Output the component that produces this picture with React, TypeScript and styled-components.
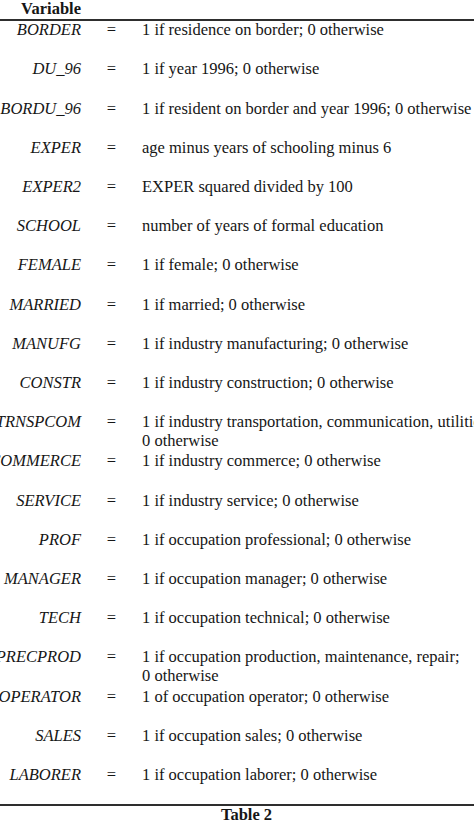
import styled, { createGlobalStyle } from 'styled-components'

const GlobalStyle = createGlobalStyle`
  html, body {
    margin: 0;
    padding: 0;
    background: #ffffff;
  }
  body {
    width: 474px;
    height: 825px;
    overflow: hidden;
    font-family: "Liberation Serif", "Times New Roman", serif;
    color: #161616;
  }
`

const rows: { name: string; lines: string[] }[] = [
  { name: 'BORDER', lines: ['1 if residence on border; 0 otherwise'] },
  { name: 'DU_96', lines: ['1 if year 1996; 0 otherwise'] },
  { name: 'BORDU_96', lines: ['1 if resident on border and year 1996; 0 otherwise'] },
  { name: 'EXPER', lines: ['age minus years of schooling minus 6'] },
  { name: 'EXPER2', lines: ['EXPER squared divided by 100'] },
  { name: 'SCHOOL', lines: ['number of years of formal education'] },
  { name: 'FEMALE', lines: ['1 if female; 0 otherwise'] },
  { name: 'MARRIED', lines: ['1 if married; 0 otherwise'] },
  { name: 'MANUFG', lines: ['1 if industry manufacturing; 0 otherwise'] },
  { name: 'CONSTR', lines: ['1 if industry construction; 0 otherwise'] },
  {
    name: 'TRNSPCOM',
    lines: ['1 if industry transportation, communication, utilities;', '0 otherwise'],
  },
  { name: 'COMMERCE', lines: ['1 if industry commerce; 0 otherwise'] },
  { name: 'SERVICE', lines: ['1 if industry service; 0 otherwise'] },
  { name: 'PROF', lines: ['1 if occupation professional; 0 otherwise'] },
  { name: 'MANAGER', lines: ['1 if occupation manager; 0 otherwise'] },
  { name: 'TECH', lines: ['1 if occupation technical; 0 otherwise'] },
  {
    name: 'PRECPROD',
    lines: ['1 if occupation production, maintenance, repair;', '0 otherwise'],
  },
  { name: 'OPERATOR', lines: ['1 of occupation operator; 0 otherwise'] },
  { name: 'SALES', lines: ['1 if occupation sales; 0 otherwise'] },
  { name: 'LABORER', lines: ['1 if occupation laborer; 0 otherwise'] },
]

const App = () => {
  return (
    <>
      <GlobalStyle />
      <Table>
        <Header>
          <NameCell>
            <HeadLabel>Variable</HeadLabel>
          </NameCell>
        </Header>
        <Body>
          {rows.map(row => (
            <Row key={row.name}>
              <NameCell>
                <VarName>{row.name}</VarName>
              </NameCell>
              <Equals>=</Equals>
              <Description>
                {row.lines.map(line => (
                  <Line key={line}>{line}</Line>
                ))}
              </Description>
            </Row>
          ))}
        </Body>
        <Caption>Table 2</Caption>
      </Table>
    </>
  )
}

export default App

const Table = styled.section`
  width: 474px;
  font-size: 16.5px;
  line-height: 18.4px;
`

const Header = styled.div`
  display: grid;
  grid-template-columns: 81px 1fr;
  height: 19px;
  border-bottom: 2px solid #2e2e2e;
`

const NameCell = styled.div`
  display: flex;
  justify-content: flex-end;
  white-space: nowrap;
`

const HeadLabel = styled.span`
  font-weight: bold;
`

const Body = styled.div`
  display: flex;
  flex-direction: column;
  padding-top: 0.2px;
  border-bottom: 2px solid #2e2e2e;
`

const Row = styled.div`
  display: grid;
  grid-template-columns: 81px 61px 1fr;
  height: 39.21px;
  &:last-child {
    height: 38px;
  }
`

const VarName = styled.span`
  font-style: italic;
`

const Equals = styled.span`
  text-align: center;
`

const Description = styled.div`
  display: flex;
  flex-direction: column;
  white-space: nowrap;
  overflow: visible;
`

const Line = styled.span``

const Caption = styled.div`
  padding-left: 19px;
  text-align: center;
  font-weight: bold;
  line-height: 18.4px;
`
